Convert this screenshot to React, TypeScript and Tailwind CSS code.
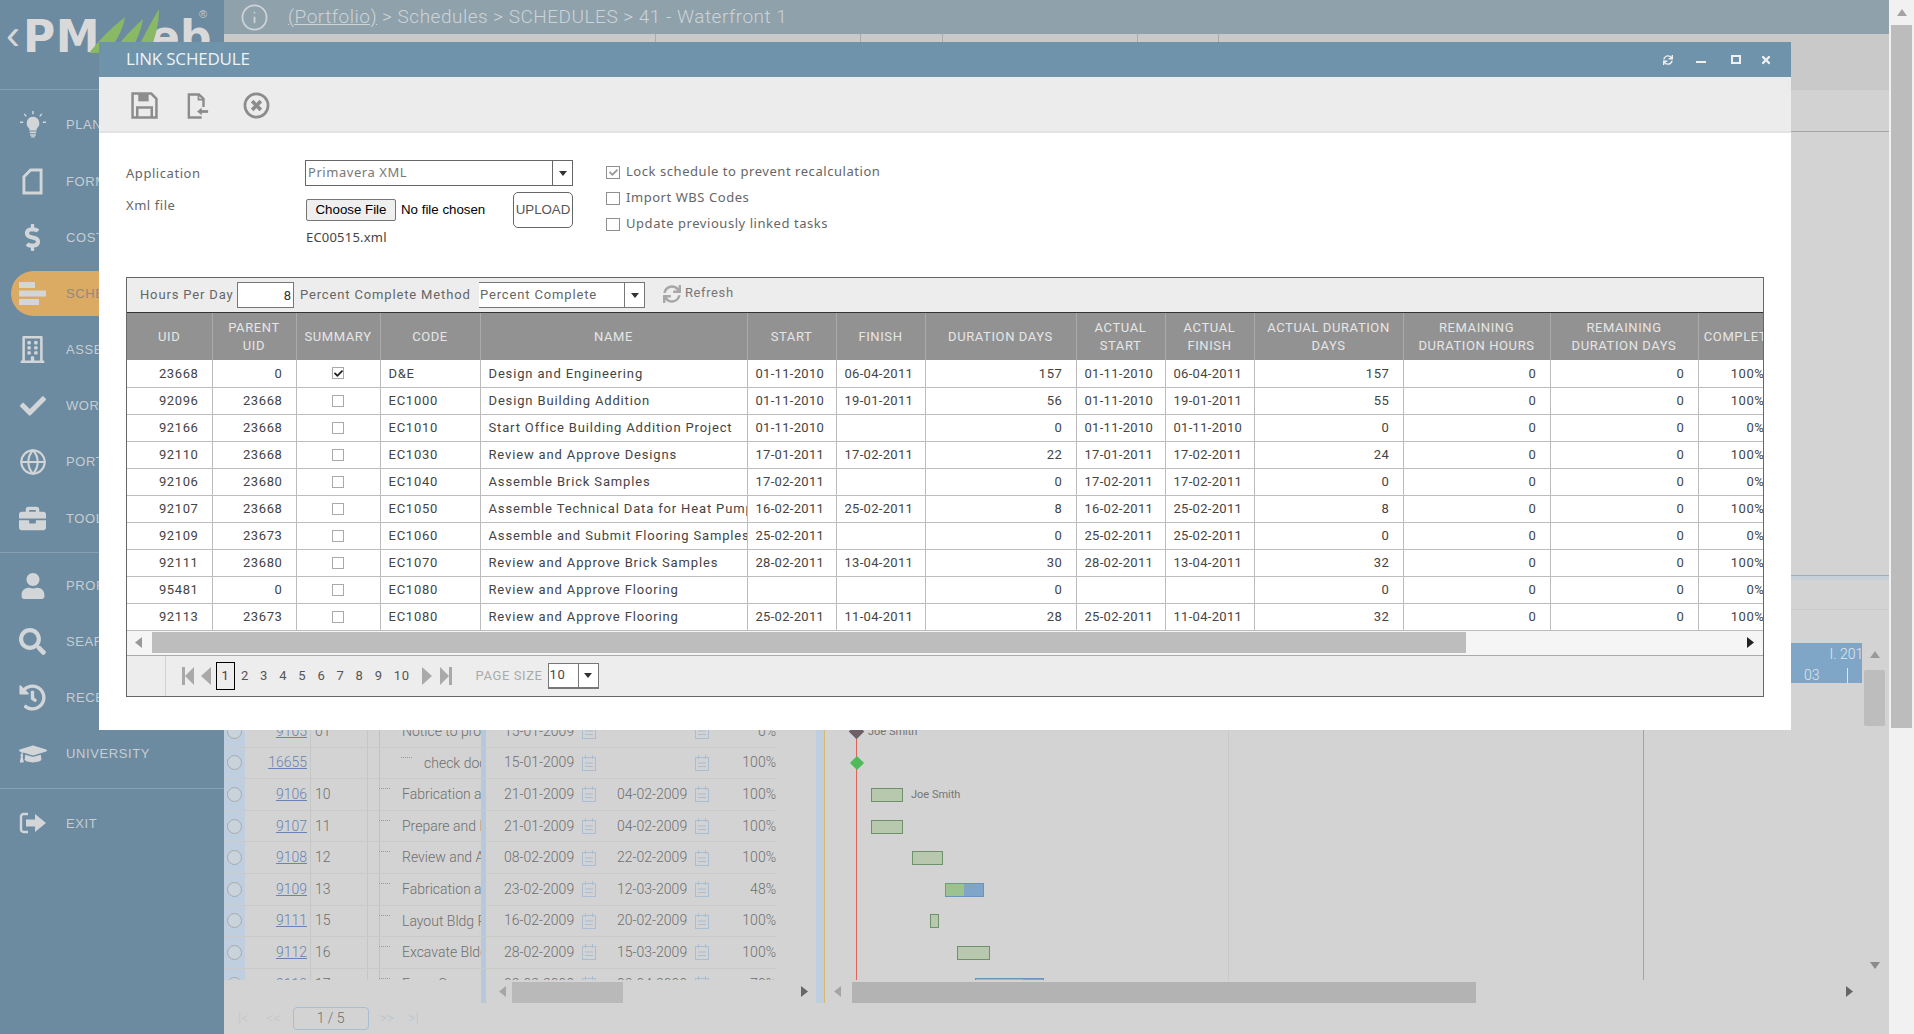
import type { ReactNode } from "react";
import {
  FaBriefcase,
  FaCheck,
  FaDollarSign,
  FaGraduationCap,
  FaHistory,
  FaRegBuilding,
  FaSearch,
  FaSync,
  FaTimes,
  FaUser,
} from "react-icons/fa";
import { Globe, Info } from "lucide-react";

const gridRows = [
  ["23668", "0", true, "D&E", "Design and Engineering", "01-11-2010", "06-04-2011", "157", "01-11-2010", "06-04-2011", "157", "0", "0", "100%"],
  ["92096", "23668", false, "EC1000", "Design Building Addition", "01-11-2010", "19-01-2011", "56", "01-11-2010", "19-01-2011", "55", "0", "0", "100%"],
  ["92166", "23668", false, "EC1010", "Start Office Building Addition Project", "01-11-2010", "", "0", "01-11-2010", "01-11-2010", "0", "0", "0", "0%"],
  ["92110", "23668", false, "EC1030", "Review and Approve Designs", "17-01-2011", "17-02-2011", "22", "17-01-2011", "17-02-2011", "24", "0", "0", "100%"],
  ["92106", "23680", false, "EC1040", "Assemble Brick Samples", "17-02-2011", "", "0", "17-02-2011", "17-02-2011", "0", "0", "0", "0%"],
  ["92107", "23668", false, "EC1050", "Assemble Technical Data for Heat Pump", "16-02-2011", "25-02-2011", "8", "16-02-2011", "25-02-2011", "8", "0", "0", "100%"],
  ["92109", "23673", false, "EC1060", "Assemble and Submit Flooring Samples", "25-02-2011", "", "0", "25-02-2011", "25-02-2011", "0", "0", "0", "0%"],
  ["92111", "23680", false, "EC1070", "Review and Approve Brick Samples", "28-02-2011", "13-04-2011", "30", "28-02-2011", "13-04-2011", "32", "0", "0", "100%"],
  ["95481", "0", false, "EC1080", "Review and Approve Flooring", "", "", "0", "", "", "0", "0", "0", "0%"],
  ["92113", "23673", false, "EC1080", "Review and Approve Flooring", "25-02-2011", "11-04-2011", "28", "25-02-2011", "11-04-2011", "32", "0", "0", "100%"],
] as const;

const behindRows = [
  { id: "9105", wbs: "01", name: "Notice to proceed", indent: false, start: "15-01-2009", finish: "", pct: "0%" },
  { id: "16655", wbs: "", name: "check documents", indent: true, start: "15-01-2009", finish: "", pct: "100%" },
  { id: "9106", wbs: "10", name: "Fabrication and", indent: false, start: "21-01-2009", finish: "04-02-2009", pct: "100%" },
  { id: "9107", wbs: "11", name: "Prepare and Issue", indent: false, start: "21-01-2009", finish: "04-02-2009", pct: "100%" },
  { id: "9108", wbs: "12", name: "Review and Approve", indent: false, start: "08-02-2009", finish: "22-02-2009", pct: "100%" },
  { id: "9109", wbs: "13", name: "Fabrication and", indent: false, start: "23-02-2009", finish: "12-03-2009", pct: "48%" },
  { id: "9111", wbs: "15", name: "Layout Bldg Pad", indent: false, start: "16-02-2009", finish: "20-02-2009", pct: "100%" },
  { id: "9112", wbs: "16", name: "Excavate Bldg", indent: false, start: "28-02-2009", finish: "15-03-2009", pct: "100%" },
  { id: "9113", wbs: "17", name: "Form Concrete", indent: false, start: "02-03-2009", finish: "03-04-2009", pct: "70%" },
];

function LightbulbIcon() {
  return (
    <svg viewBox="0 0 28 30" className="h-[28px] w-[26px]" fill="currentColor">
      <path d="M14 6a7 7 0 0 0-4 12.6V21h8v-2.4A7 7 0 0 0 14 6z" />
      <path d="M10.5 22h7v2h-7zM11 25h6v1.5h-6zM12 27h4v1.5h-4z" />
      <path d="M14 0v3.5M4.5 3l2.3 2.7M23.5 3l-2.3 2.7M0 12h3.5M24.5 12H28" stroke="currentColor" strokeWidth="1.6" fill="none" />
    </svg>
  );
}

function FormIcon() {
  return (
    <svg viewBox="0 0 22 28" className="h-[27px] w-[21px]" fill="none" stroke="currentColor" strokeWidth="3">
      <path d="M9 2h11v24H2V9z" />
    </svg>
  );
}

function ScheduleIcon() {
  return (
    <svg viewBox="0 0 28 24" className="h-[24px] w-[28px]" fill="currentColor">
      <rect x="0" y="0" width="16" height="6" />
      <rect x="0" y="8.5" width="27" height="6" />
      <rect x="0" y="17" width="20" height="6" />
    </svg>
  );
}

function ExitIcon() {
  return (
    <svg viewBox="0 0 28 24" className="h-[24px] w-[28px]" fill="currentColor">
      <path d="M9 3H4.5A2.5 2.5 0 0 0 2 5.5v13A2.5 2.5 0 0 0 4.500 21H9" fill="none" stroke="currentColor" strokeWidth="2.4" />
      <path d="M7 8.500h9V3l11 9-11 9v-5.500H7z" />
    </svg>
  );
}

function SaveIcon() {
  return (
    <svg viewBox="0 0 26 26" className="h-[27px] w-[27px]" fill="none" stroke="#8c8c8c" strokeWidth="2.4">
      <path d="M1.500 1.500h18l5 5v18h-23z" />
      <path d="M7 2v7h10V2z" fill="#8c8c8c" stroke="none" />
      <path d="M6 24v-9h14v9" />
    </svg>
  );
}

function ImportDocIcon() {
  return (
    <svg viewBox="0 0 24 28" className="h-[26px] w-[22px]" fill="none" stroke="#8c8c8c" strokeWidth="2.6">
      <path d="M18 15V6l-5-4.500H2v25h14" />
      <path d="M12.500 2v5H18" strokeWidth="1.800" />
      <path d="M23 20H13" strokeWidth="3" />
      <path d="M16 16l-5 4 5 4z" fill="#8c8c8c" stroke="none" />
    </svg>
  );
}

function CloseCircleIcon() {
  return (
    <svg viewBox="0 0 28 28" className="h-[27px] w-[27px]" fill="none" stroke="#8c8c8c">
      <circle cx="14" cy="14" r="12" strokeWidth="2.800" />
      <path d="M9.500 9.500l9 9M18.500 9.500l-9 9" strokeWidth="3.800" />
    </svg>
  );
}

function Triangle({ dir, className }: { dir: "left" | "right" | "up" | "down"; className: string }) {
  const points = { left: "10,0 10,12 0,6", right: "0,0 0,12 10,6", up: "0,10 12,10 6,0", down: "0,0 12,0 6,10" }[dir];
  return (
    <svg viewBox={dir === "left" || dir === "right" ? "0 0 10 12" : "0 0 12 10"} preserveAspectRatio="none" className={className} fill="currentColor">
      <polygon points={points} />
    </svg>
  );
}

function PagerEdge({ flip }: { flip?: boolean }) {
  return (
    <svg viewBox="0 0 12 18" className={`h-[18px] w-[12px] text-[#a9a9a9] ${flip ? "rotate-180" : ""}`} fill="currentColor">
      <rect x="0" y="0" width="3" height="18" />
      <polygon points="12,0 12,18 3,9" />
    </svg>
  );
}

function CalendarGlyph() {
  return (
    <svg viewBox="0 0 14 16" className="h-[16px] w-[14px]" fill="none" stroke="#a9bdd3" strokeWidth="1">
      <rect x="0.500" y="2.500" width="13" height="13" />
      <path d="M3.500 0v4M10.500 0v4M3 8h8M3 11.500h8" />
    </svg>
  );
}

function NavItem({ icon, label, active }: { icon: ReactNode; label: string; active?: boolean }) {
  return (
    <div className="relative flex h-[56.200px] items-center">
      {active && <div className="absolute left-[11px] top-[5px] h-[45px] w-[200px] rounded-l-[23px] bg-[#dcab63]" />}
      <div className="relative flex w-[66px] justify-center pr-[1px] text-[#d2d6d9]">{icon}</div>
      <span className={`relative font-['Liberation_Sans',sans-serif] text-[13px] tracking-[0.6px] ${active ? "text-[#92897a]" : "text-[#c6ced3]"}`}>
        {label}
      </span>
    </div>
  );
}

function Sidebar() {
  return (
    <aside className="flex h-[1034px] w-[224px] shrink-0 flex-col bg-[#6c8aa0]">
      <div className="relative flex h-[90px] shrink-0 border-b border-[#86a0b2] pl-[6px] pt-[12px]">
        <span className="font-['Liberation_Sans',sans-serif] text-[42px] leading-[46px] text-[#d6d6d6]">‹</span>
        <span className="ml-[3px] font-['DejaVu_Sans',sans-serif] text-[44px] font-bold leading-[50px] tracking-[0.5px] text-[#d9d9d9]">PM</span>
        <span className="ml-[50px] font-['DejaVu_Sans',sans-serif] text-[44px] font-bold leading-[50px] text-[#d9d9d9]">eb</span>
        <svg viewBox="0 0 72 46" className="absolute left-[89px] top-[8px] h-[46px] w-[72px]" fill="#8ab865">
          <path d="M0 45C10 32 22 20 36 9 34 22 26 36 18 45z" />
          <path d="M24 45C32 32 42 22 54 11 52 24 46 36 40 45z" />
          <path d="M46 45C54 30 62 14 70 1 70 16 66 32 60 45z" />
        </svg>
        <span className="absolute left-[199px] top-[6px] font-['Liberation_Sans',sans-serif] text-[11px] text-[#c2cace]">®</span>
      </div>
      <nav className="flex flex-col pt-[7px]">
        <NavItem icon={<LightbulbIcon />} label="PLANNING" />
        <NavItem icon={<FormIcon />} label="FORMS" />
        <NavItem icon={<FaDollarSign size={27} />} label="COSTS" />
        <NavItem icon={<ScheduleIcon />} label="SCHEDULES" active />
        <NavItem icon={<FaRegBuilding size={27} />} label="ASSETS" />
        <NavItem icon={<FaCheck size={26} />} label="WORKFLOW" />
        <NavItem icon={<Globe size={28} strokeWidth={1.8} />} label="PORTFOLIO" />
        <NavItem icon={<FaBriefcase size={27} />} label="TOOLS" />
      </nav>
      <div className="mt-[5px] border-t border-[#86a0b2] pt-[5px]">
        <NavItem icon={<FaUser size={26} />} label="PROFILE" />
        <NavItem icon={<FaSearch size={27} />} label="SEARCH" />
        <NavItem icon={<FaHistory size={27} />} label="RECENT" />
        <NavItem icon={<FaGraduationCap size={28} />} label="UNIVERSITY" />
      </div>
      <div className="mt-[6px] border-t border-[#86a0b2] pt-[6px]">
        <NavItem icon={<ExitIcon />} label="EXIT" />
      </div>
    </aside>
  );
}

function GanttRow({ children }: { children: ReactNode }) {
  return <div className="flex h-[31.600px] items-center">{children}</div>;
}

function GanttBar({ left, width, progress }: { left: number; width: number; progress?: number }) {
  return (
    <div
      className={`h-[14px] shrink-0 border ${progress ? "border-[#6b94bd] bg-[#7fa6c9]" : "border-[#6d9169] bg-[#b7c8ae]"}`}
      style={{ marginLeft: left, width }}
    >
      {progress && <div className="h-full bg-[#9cc38f]" style={{ width: `${progress}%` }} />}
    </div>
  );
}

function BehindGrid() {
  return (
    <div className="flex h-[391px] flex-col">
      <div className="flex h-[360px] min-h-0">
        {/* left task pane */}
        <div className="relative flex w-[592px] shrink-0 flex-col pt-[73px]">
          <div className="absolute left-0 top-0 h-[337px] w-[21px] bg-[#bfcfe0]" />
          <div className="absolute left-[86px] top-0 h-[337px] w-px bg-[#c6c6c6]" />
          <div className="absolute left-[143px] top-0 h-[337px] w-px bg-[#c6c6c6]" />
          <div className="absolute left-[155px] top-0 h-[337px] w-px bg-[#b5c3d1]" />
          <div className="absolute left-[257px] top-0 h-[360px] w-[5px] bg-[#b8c8dc]" />
          <div className="relative h-[264px] overflow-hidden">
            {behindRows.map((r) => (
              <div key={r.id} className="flex h-[31.600px] w-[552px] items-center border-b border-[#cacaca] font-['Roboto',sans-serif] text-[14px] font-light text-[#6f6f6f]">
                <div className="flex w-[21px] shrink-0 justify-center">
                  <div className="h-[15px] w-[15px] rounded-full border border-[#a9a9a9] bg-[#c9d3dc]" />
                </div>
                <a className="w-[62px] shrink-0 text-right text-[#6a83b0] underline">{r.id}</a>
                <span className="w-[6px] shrink-0" />
                <span className="w-[54px] shrink-0 pl-[2px]">{r.wbs}</span>
                <div className={`relative h-full w-[114px] shrink-0 overflow-hidden whitespace-nowrap leading-[31px] ${r.indent ? "pl-[57px]" : "pl-[35px]"}`}>
                  <div className={`absolute top-[9px] h-px w-[11px] border-t border-dotted border-[#999] ${r.indent ? "left-[34px]" : "left-[12px]"}`} />
                  {r.name}
                </div>
                <div className="h-full w-[5px] shrink-0" />
                <span className="ml-[18px] w-[78px] shrink-0">{r.start}</span>
                <CalendarGlyph />
                <span className="ml-[21px] w-[78px] shrink-0">{r.finish}</span>
                <CalendarGlyph />
                <span className="w-[67px] shrink-0 text-right">{r.pct}</span>
              </div>
            ))}
          </div>
          <div className="flex h-[23px] items-end pl-[275px]">
            <Triangle dir="left" className="mb-[6px] h-[11px] w-[7px] text-[#a5a5a5]" />
            <div className="ml-[6px] h-[21px] w-[111px] bg-[#b9b9b9]" />
            <div className="ml-[178px]"><Triangle dir="right" className="mb-[6px] h-[11px] w-[7px] text-[#666]" /></div>
          </div>
        </div>
        <div className="h-[360px] w-[8px] shrink-0 bg-[#bfcfe0]" />
        {/* gantt pane */}
        <div className="relative flex w-[1038px] shrink-0 flex-col border-l border-[#d8b86a]">
          <div className="flex h-[40px] shrink-0 flex-col items-end overflow-hidden bg-[#7fa6c7] font-['Roboto',sans-serif] text-[14px] font-light text-[#dfe7ee]">
            <span className="mr-[-9px] leading-[22px]">I. 2010</span>
            <div className="flex w-[58px] items-center">
              <span>03</span>
              <span className="ml-[27px] h-[16px] w-px bg-[#dfe7ee]" />
            </div>
          </div>
          <div className="absolute left-[31px] top-[73px] h-[264px] w-px bg-[#e0645c]" />
          <div className="absolute left-[403px] top-[73px] h-[264px] w-px bg-[#c9c9c9]" />
          <div className="absolute left-[818px] top-[73px] h-[264px] w-px bg-[#c99a6a]" />
          <div className="mt-[33px] h-[264px] overflow-hidden">
            <GanttRow>
              <div className="ml-[26px] h-[11px] w-[11px] rotate-45 bg-[#6e5f68]" />
              <span className="ml-[6px] font-['Roboto',sans-serif] text-[11px] text-[#757575]">Joe Smith</span>
            </GanttRow>
            <GanttRow><div className="ml-[27px] h-[10px] w-[10px] rotate-45 bg-[#4fbb58]" /></GanttRow>
            <GanttRow>
              <GanttBar left={46} width={32} />
              <span className="ml-[8px] font-['Roboto',sans-serif] text-[11px] text-[#757575]">Joe Smith</span>
            </GanttRow>
            <GanttRow><GanttBar left={46} width={32} /></GanttRow>
            <GanttRow><GanttBar left={87} width={31} /></GanttRow>
            <GanttRow><GanttBar left={120} width={39} progress={48} /></GanttRow>
            <GanttRow><GanttBar left={105} width={9} /></GanttRow>
            <GanttRow><GanttBar left={132} width={33} /></GanttRow>
            <GanttRow><GanttBar left={150} width={69} progress={70} /></GanttRow>
          </div>
          <div className="flex h-[23px] items-end pl-[9px]">
            <Triangle dir="left" className="mb-[6px] h-[11px] w-[7px] text-[#a5a5a5]" />
            <div className="ml-[11px] h-[21px] w-[624px] bg-[#b3b3b3]" />
            <div className="ml-[370px]"><Triangle dir="right" className="mb-[6px] h-[11px] w-[7px] text-[#666]" /></div>
          </div>
        </div>
        {/* inner vertical scroller */}
        <div className="flex h-[360px] w-[27px] shrink-0 flex-col items-center pl-[2px] pr-[4px]">
          <div className="flex h-[22px] items-center"><Triangle dir="up" className="h-[7px] w-[10px] text-[#9a9a9a]" /></div>
          <div className="mt-[5px] h-[56px] w-[21px] rounded-[2px] bg-[#bdbdbd]" />
          <div className="mt-[236px]"><Triangle dir="down" className="h-[7px] w-[10px] text-[#8a8a8a]" /></div>
        </div>
      </div>
      {/* bottom pager */}
      <div className="flex h-[31px] items-center pl-[14px] font-['Roboto',sans-serif] text-[14px] font-light text-[#b9c4cf]">
        <span className="mr-[18px] text-[#c4c4c4]">|&lt;</span>
        <span className="mr-[12px] text-[#c4c4c4]">&lt;&lt;</span>
        <div className="flex h-[23px] w-[76px] items-center justify-center rounded-[4px] border border-[#a9bdd3] text-[#6f6f6f]">1 / 5</div>
        <span className="ml-[11px]">&gt;&gt;</span>
        <span className="ml-[14px]">&gt;|</span>
      </div>
    </div>
  );
}

const colWidths = [85, 84, 84, 100, 267, 89, 89, 151, 89, 89, 149, 147, 148, 83];
const colHeads = [
  "UID",
  "PARENT UID",
  "SUMMARY",
  "CODE",
  "NAME",
  "START",
  "FINISH",
  "DURATION DAYS",
  "ACTUAL START",
  "ACTUAL FINISH",
  "ACTUAL DURATION DAYS",
  "REMAINING DURATION HOURS",
  "REMAINING DURATION DAYS",
  "COMPLETE",
];

function cellClass(j: number) {
  if (j === 13) return "pr-[16px] text-right";
  if (j < 2 || j === 7 || j > 9) return "pr-[13px] text-right";
  if (j === 4) return "pl-[8px] tracking-[0.85px]";
  if (j === 3) return "pl-[8px] tracking-[0.75px]";
  return "pl-[8px] tracking-[0.3px]";
}

function LinkGrid() {
  return (
    <div className="w-[1638px] overflow-hidden border border-[#666] font-['Roboto',sans-serif] text-[13px] tracking-[0.6px] text-[#444]">
      <div className="flex h-[35px] items-center border-b border-[#333] bg-[#ededed] tracking-[0.85px] text-[#666]">
        <span className="ml-[13px] w-[97px] shrink-0 whitespace-nowrap">Hours Per Day</span>
        <div className="h-[26px] w-[57px] shrink-0 border border-[#777] bg-white pr-[1px] text-right leading-[26px] text-[#333]">8</div>
        <span className="ml-[6px] w-[179px] shrink-0 whitespace-nowrap">Percent Complete Method</span>
        <div className="flex h-[26px] w-[166px] shrink-0 items-center border-y border-r border-[#777] bg-white leading-[24px]">
          <span className="w-[145px] whitespace-nowrap pl-[1px]">Percent Complete</span>
          <div className="flex h-full flex-1 items-center justify-center border-l border-[#777]">
            <Triangle dir="down" className="h-[5px] w-[8px] text-[#333]" />
          </div>
        </div>
        <FaSync size={18} className="ml-[18px] mb-[3px] text-[#a7a7a7]" />
        <span className="ml-[4px] mb-[4px] tracking-[0.6px] text-[#777]">Refresh</span>
      </div>
      <table className="w-[1654px] table-fixed border-collapse">
        <colgroup>
          {colWidths.map((w, i) => (
            <col key={i} style={{ width: w }} />
          ))}
        </colgroup>
        <thead>
          <tr className="h-[47px] bg-[#929292] text-[#e6e6e6]">
            {colHeads.map((h) => (
              <th key={h} className="overflow-hidden border-r border-[#aaa] px-[5px] text-center font-normal leading-[18px]">
                {h}
              </th>
            ))}
          </tr>
        </thead>
        <tbody>
          {gridRows.map((r, i) => (
            <tr key={i} className="h-[27px] border-b border-[#bdbdbd]">
              {r.map((v, j) => {
                if (j === 2) {
                  return (
                    <td key={j} className="border-r border-[#bdbdbd]">
                      <div className="flex justify-center">
                        <div className="flex h-[12px] w-[12px] items-center justify-center border border-[#aaa] bg-white">
                          {v === true && <FaCheck size={9} className="text-[#222]" />}
                        </div>
                      </div>
                    </td>
                  );
                }
                return (
                  <td key={j} className={`overflow-hidden whitespace-nowrap border-r border-[#bdbdbd] ${cellClass(j)}`}>
                    {v}
                  </td>
                );
              })}
            </tr>
          ))}
        </tbody>
      </table>
      <div className="flex h-[25px] items-center border-b border-[#aaa] bg-[#f5f5f5]">
        <Triangle dir="left" className="ml-[8px] h-[11px] w-[7px] text-[#999]" />
        <div className="ml-[10px] h-[21px] w-[1314px] bg-[#bdbdbd]" />
        <Triangle dir="right" className="ml-[281px] h-[11px] w-[7px] text-[#222]" />
      </div>
      <div className="flex h-[40px] items-center bg-[#ededed]">
        <div className="h-full w-[39px] border-r border-[#d2d2d2]" />
        <div className="ml-[16px]"><PagerEdge /></div>
        <Triangle dir="left" className="ml-[7px] h-[18px] w-[10px] text-[#a9a9a9]" />
        <div className="ml-[5px] flex h-[28px] w-[19px] items-center justify-center border border-black text-[#6b2a3a]">1</div>
        <div className="ml-[6px] flex gap-[11.200px] text-[#555]">
          {[2, 3, 4, 5, 6, 7, 8, 9, 10].map((n) => (
            <span key={n}>{n}</span>
          ))}
        </div>
        <Triangle dir="right" className="ml-[12px] h-[18px] w-[10px] text-[#a9a9a9]" />
        <div className="ml-[8px]"><PagerEdge flip /></div>
        <span className="ml-[24px] whitespace-nowrap text-[#aaa]">PAGE SIZE</span>
        <div className="ml-[5px] flex h-[26px] w-[51px] items-center border border-[#777] border-b-2 bg-white">
          <span className="w-[29px] pl-[1px]">10</span>
          <div className="flex h-full flex-1 items-center justify-center border-l border-[#777]">
            <Triangle dir="down" className="h-[5px] w-[8px] text-[#333]" />
          </div>
        </div>
      </div>
    </div>
  );
}

function CheckRow({ label, checked }: { label: string; checked?: boolean }) {
  return (
    <div className="flex h-[26px] items-center">
      <div className="flex h-[13px] w-[14px] items-center justify-center border border-[#8f8f8f] bg-white">
        {checked && <FaCheck size={9} className="text-[#999]" />}
      </div>
      <span className="ml-[6px]">{label}</span>
    </div>
  );
}

function LinkScheduleDialog() {
  return (
    <div className="absolute left-[99px] top-[42px] flex h-[688px] w-[1692px] flex-col bg-white">
      <div className="flex h-[35px] shrink-0 items-center bg-[#6f93ab] pl-[27px] pr-[19px] text-white">
        <span className="mb-[2px] font-['Open_Sans',sans-serif] text-[17px] tracking-[-0.2px] text-[#edf2f5]">LINK SCHEDULE</span>
        <div className="ml-auto flex items-center text-[#f0f0f0]">
          <FaSync size={10} />
          <div className="ml-[23px] mt-[5px] h-[2px] w-[10px] bg-[#f0f0f0]" />
          <div className="ml-[25px] h-[9px] w-[10px] border-2 border-[#f0f0f0]" />
          <FaTimes size={12} className="ml-[19px]" />
        </div>
      </div>
      <div className="flex h-[56px] shrink-0 items-center border-b-2 border-[#e3e3e3] bg-[#ececec] pl-[32px] pt-[3px]">
        <SaveIcon />
        <div className="ml-[29px]"><ImportDocIcon /></div>
        <div className="ml-[34px]"><CloseCircleIcon /></div>
      </div>
      <div className="flex flex-col pl-[27px]">
        <div className="flex h-[144px] pt-[27px] font-['Noto_Sans',sans-serif] text-[13px] tracking-[0.55px] text-[#666]">
          <div className="w-[179px] shrink-0">
            <div className="h-[32px] leading-[26px]">Application</div>
            <div className="leading-[26px]">Xml file</div>
          </div>
          <div className="w-[268px] shrink-0">
            <div className="flex h-[26px] items-center border border-[#666] bg-white">
              <span className="w-[246px] pl-[2px] text-[#777]">Primavera XML</span>
              <div className="flex h-full flex-1 items-center justify-center border-l border-[#666]">
                <Triangle dir="down" className="h-[5px] w-[8px] text-[#333]" />
              </div>
            </div>
            <div className="mt-[6px] flex items-center justify-between">
              <div className="flex items-center font-['Liberation_Sans',sans-serif] text-[13.300px] tracking-normal text-black">
                <button className="ml-[1px] h-[22px] w-[90px] rounded-[2px] border border-[#767676] bg-[#efefef] text-center">Choose File</button>
                <span className="ml-[5px]">No file chosen</span>
              </div>
              <button className="h-[36px] w-[60px] rounded-[5px] border border-[#666] bg-white font-['Liberation_Sans',sans-serif] text-[13.300px] tracking-normal text-[#555]">UPLOAD</button>
            </div>
            <div className="mt-[-1px] pl-[1px] leading-[20px] tracking-[0.2px] text-[#444]">EC00515.xml</div>
          </div>
          <div className="ml-[33px] mt-[-1px] flex flex-col">
            <CheckRow label="Lock schedule to prevent recalculation" checked />
            <CheckRow label="Import WBS Codes" />
            <CheckRow label="Update previously linked tasks" />
          </div>
        </div>
        <LinkGrid />
      </div>
    </div>
  );
}

export default function App() {
  return (
    <div className="relative flex h-[1034px] w-[1914px] overflow-hidden bg-[#d3d3d3]">
      <Sidebar />
      <main className="flex w-[1665px] shrink-0 flex-col">
        <div className="flex h-[34px] shrink-0 items-center bg-[#8fa1ab] pl-[16px] font-['Roboto',sans-serif] text-[19px] font-light tracking-[0.5px] text-[#cdd3d7]">
          <Info size={29} strokeWidth={1.5} />
          <span className="ml-[19px] underline">(Portfolio)</span>
          <span className="ml-[5px]">&gt; Schedules &gt; SCHEDULES &gt; 41 - Waterfront 1</span>
        </div>
        <div className="flex h-[56px] shrink-0 items-start bg-[#c9c9c9]">
          <div className="ml-[431px] h-[8px] w-px bg-[#aaa]" />
          <div className="ml-[204px] h-[8px] w-px bg-[#aaa]" />
          <div className="ml-[81px] h-[8px] w-px bg-[#aaa]" />
          <div className="ml-[194px] h-[8px] w-px bg-[#aaa]" />
          <div className="ml-[80px] h-[8px] w-px bg-[#aaa]" />
        </div>
        <div className="h-[42px] shrink-0 border-b border-[#a3a3a3] bg-[#d2d2d2]" />
        <div className="h-[444px] shrink-0 border-b border-[#a6adb3]" />
        <div className="h-[4px] shrink-0 bg-[#c5d0d8]" />
        <div className="h-[30px] shrink-0 border-b border-[#cacaca]" />
        <div className="h-[33px] shrink-0" />
        <BehindGrid />
      </main>
      <div className="flex w-[25px] shrink-0 flex-col bg-[#f1f1f1] pl-[2px] pr-[2px]">
        <div className="flex h-[25px] items-center justify-center">
          <Triangle dir="up" className="h-[7px] w-[10px] text-[#a3a3a3]" />
        </div>
        <div className="h-[703px] w-[21px] bg-[#bcbcbc]" />
      </div>
      <LinkScheduleDialog />
    </div>
  );
}
